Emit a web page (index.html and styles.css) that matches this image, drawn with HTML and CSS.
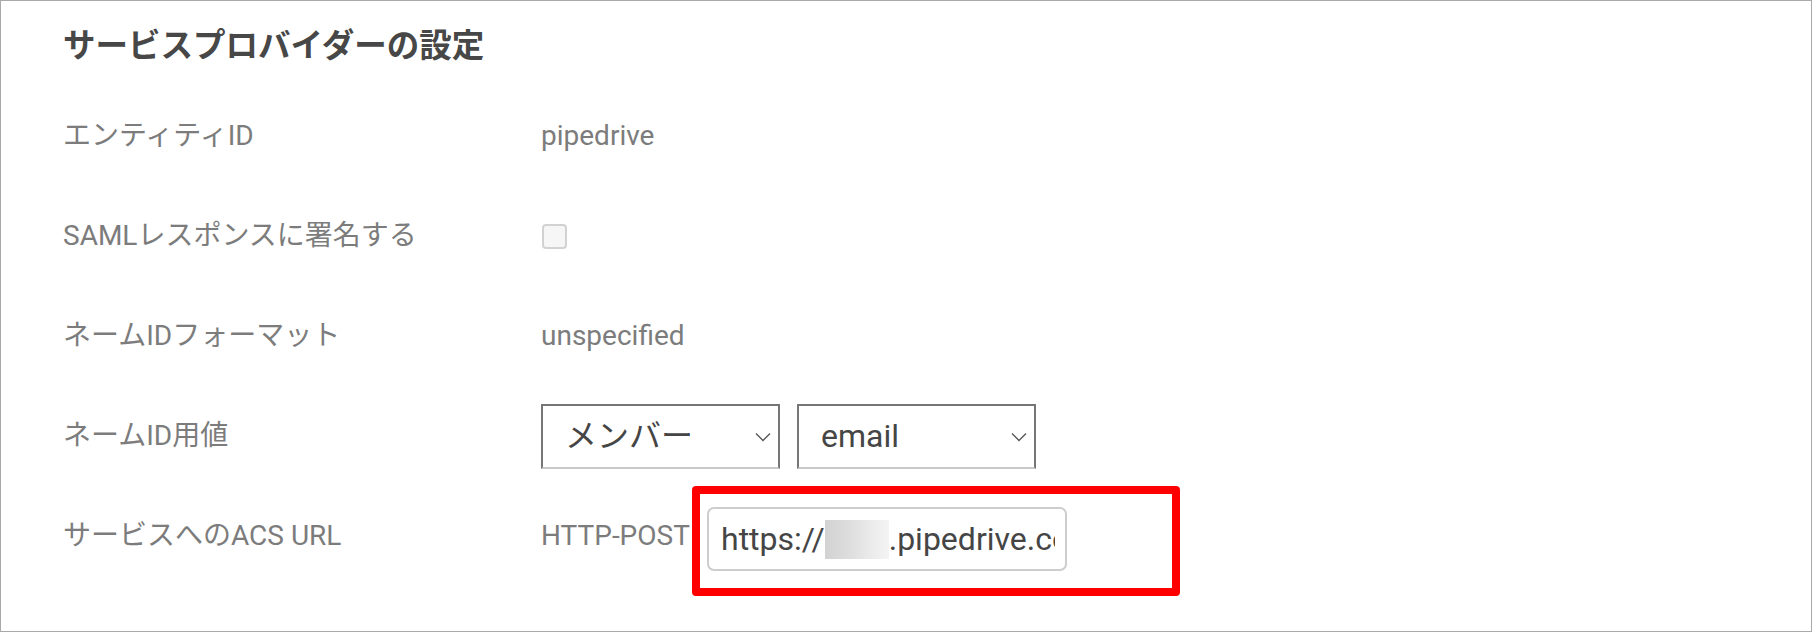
FILE: index.html
```html
<!DOCTYPE html>
<html lang="ja">
<head>
<meta charset="utf-8">
<title>サービスプロバイダーの設定</title>
<link rel="stylesheet" href="styles.css">
</head>
<body>
<section class="panel">
  <h1 class="title">サービスプロバイダーの設定</h1>
  <div class="row">
    <div class="label">エンティティID</div>
    <div class="value">pipedrive</div>
  </div>
  <div class="row">
    <div class="label">SAMLレスポンスに署名する</div>
    <div class="value"><span class="checkbox"></span></div>
  </div>
  <div class="row">
    <div class="label">ネームIDフォーマット</div>
    <div class="value">unspecified</div>
  </div>
  <div class="row">
    <div class="label">ネームID用値</div>
    <div class="value selects">
      <div class="select">
        <span class="select-text">メンバー</span>
        <svg class="chevron" width="16" height="10" viewBox="0 0 16 10"><path d="M1 1.5 L8 8.5 L15 1.5" fill="none" stroke="#555" stroke-width="1.3"/></svg>
      </div>
      <div class="select">
        <span class="select-text">email</span>
        <svg class="chevron" width="16" height="10" viewBox="0 0 16 10"><path d="M1 1.5 L8 8.5 L15 1.5" fill="none" stroke="#555" stroke-width="1.3"/></svg>
      </div>
    </div>
  </div>
  <div class="row row-acs">
    <div class="label">サービスへのACS URL</div>
    <div class="value acs">
      <span class="binding">HTTP-POST</span>
      <div class="highlight">
        <div class="input">
          <div class="input-text">https://<span class="redacted"></span>.pipedrive.com</div>
        </div>
      </div>
    </div>
  </div>
</section>
</body>
</html>
```
FILE: styles.css
```css
* { box-sizing: border-box; }
html, body { margin: 0; padding: 0; background: #fff; }
body {
  font-family: Roboto, "Noto Sans CJK JP", sans-serif;
  color: #777;
}
.panel {
  width: 1812px;
  height: 632px;
  border: 1px solid #a9a9a9;
  padding: 22px 0 0 62px;
  overflow: hidden;
}
.title {
  margin: 0 0 23px;
  font-family: "Noto Sans CJK JP", sans-serif;
  font-size: 32.5px;
  line-height: 40px;
  font-weight: 700;
  color: #474747;
}
.row {
  display: flex;
  align-items: center;
  height: 100px;
}
.label {
  width: 478px;
  flex-shrink: 0;
  font-size: 28px;
  line-height: 36px;
  color: #7c7c7c;
}
.value {
  font-size: 28px;
  line-height: 36px;
  color: #7c7c7c;
  display: flex;
  align-items: center;
}
.checkbox {
  display: block;
  width: 25px;
  height: 25px;
  margin-left: 1px;
  border: 2px solid #d2d2d2;
  border-radius: 4px;
  background: #f6f6f6;
}
.selects { gap: 17px; }
.select {
  width: 239px;
  height: 65px;
  display: flex;
  align-items: center;
  justify-content: space-between;
  padding: 0 7px 0 22px;
  border: 2px solid #767676;
  border-bottom-color: #c9c9c9;
  background: #fff;
}
.select-text {
  font-size: 32px;
  line-height: 40px;
  color: #454545;
}
.chevron { display: block; margin-top: 2px; }
.row-acs {
  align-items: flex-start;
  height: 110px;
}
.row-acs .label { line-height: 100px; }
.acs { align-items: flex-start; }
.binding {
  line-height: 100px;
  width: 151px;
  flex-shrink: 0;
  white-space: nowrap;
}
.highlight {
  width: 488px;
  height: 110px;
  border: 8px solid #ff0000;
  border-radius: 4px;
  padding: 13px 0 0 7px;
}
.input {
  width: 360px;
  height: 64px;
  border: 2px solid #cdcdcd;
  border-radius: 7px;
  padding: 0 10px 0 12px;
  display: flex;
  align-items: center;
  background: #fff;
}
.input-text {
  width: 100%;
  overflow: hidden;
  white-space: nowrap;
  font-size: 32px;
  line-height: 40px;
  color: #454545;
  display: flex;
  align-items: center;
}
.redacted {
  display: inline-block;
  flex-shrink: 0;
  width: 64px;
  height: 39px;
  background: linear-gradient(90deg, #d2d2d2 0%, #dedede 40%, #ececec 75%, #f4f4f4 100%);
}
```
